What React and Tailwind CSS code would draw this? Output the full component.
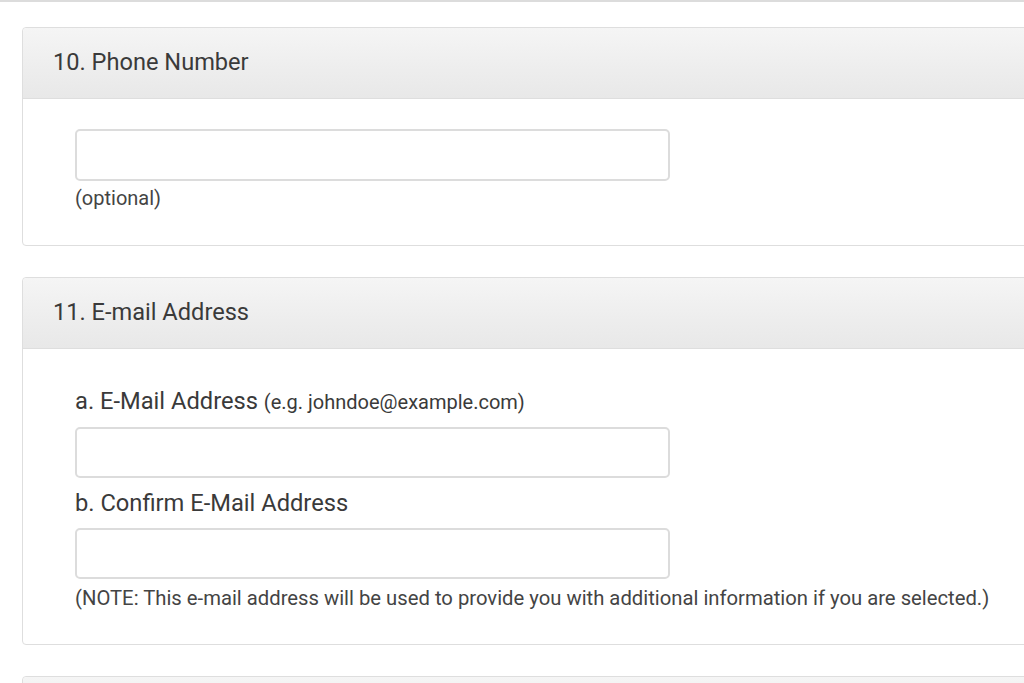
export default function App() {
  const font = { fontFamily: "Roboto, 'Liberation Sans', sans-serif" };
  return (
    <div className="w-[1024px] h-[683px] overflow-hidden bg-white text-[#3a3a3a]" style={font}>
      <div className="h-[2px] bg-[#dcdcdc]" />
      <div className="pl-[22px] pt-[25px] w-[1100px]">
        {/* Panel 10 */}
        <div className="border border-[#dedede] rounded-[4px]">
          <div className="h-[71px] flex items-center pl-[30px] border-b border-[#dedede] bg-gradient-to-b from-[#f5f5f5] to-[#e8e8e8] rounded-t-[4px] text-[23.6px]">
            10. Phone Number
          </div>
          <div className="pl-[52px] pt-[30px] pb-[35px]">
            <div className="w-[595px] h-[52px] border-2 border-[#dcdcdc] rounded-[5px] bg-white" />
            <div className="text-[20px] leading-[24px] mt-[5px] text-[#444]">(optional)</div>
          </div>
        </div>
        {/* Panel 11 */}
        <div className="mt-[31px] border border-[#dedede] rounded-[4px]">
          <div className="h-[71px] flex items-center pl-[30px] border-b border-[#dedede] bg-gradient-to-b from-[#f5f5f5] to-[#e8e8e8] rounded-t-[4px] text-[23.6px]">
            11. E-mail Address
          </div>
          <div className="pl-[52px] pt-[38px] pb-[34px]">
            <div className="text-[23.7px] leading-[28px]">
              a. E-Mail Address <span className="text-[20px]">(e.g. johndoe@example.com)</span>
            </div>
            <div className="mt-[11px] w-[595px] h-[51px] border-2 border-[#dcdcdc] rounded-[5px] bg-white" />
            <div className="text-[23.7px] leading-[28px] mt-[11px]">b. Confirm E-Mail Address</div>
            <div className="mt-[11px] w-[595px] h-[51px] border-2 border-[#dcdcdc] rounded-[5px] bg-white" />
            <div className="text-[20.25px] leading-[24px] mt-[7px] text-[#444] whitespace-nowrap">
              (NOTE: This e-mail address will be used to provide you with additional information if you are selected.)
            </div>
          </div>
        </div>
        {/* Panel 12 (partial) */}
        <div className="mt-[31px] border border-[#dedede] rounded-[4px]">
          <div className="h-[71px] bg-gradient-to-b from-[#f5f5f5] to-[#e8e8e8] rounded-t-[4px]" />
        </div>
      </div>
    </div>
  );
}
